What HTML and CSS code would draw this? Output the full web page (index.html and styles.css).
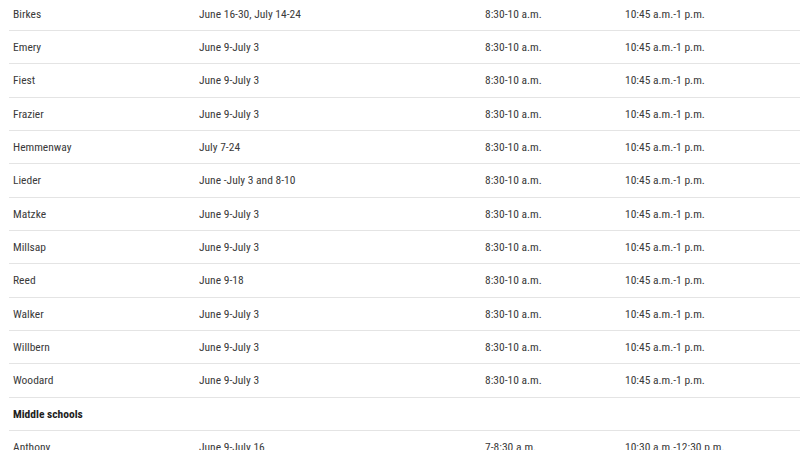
FILE: index.html
```html
<!DOCTYPE html>
<html><head><link rel="stylesheet" href="styles.css"></head>
<body>
<div class="schedule">
  <div class="row"><span>Birkes</span><span>June 16-30, July 14-24</span><span>8:30-10 a.m.</span><span>10:45 a.m.-1 p.m.</span></div>
  <div class="row"><span>Emery</span><span>June 9-July 3</span><span>8:30-10 a.m.</span><span>10:45 a.m.-1 p.m.</span></div>
  <div class="row"><span>Fiest</span><span>June 9-July 3</span><span>8:30-10 a.m.</span><span>10:45 a.m.-1 p.m.</span></div>
  <div class="row"><span>Frazier</span><span>June 9-July 3</span><span>8:30-10 a.m.</span><span>10:45 a.m.-1 p.m.</span></div>
  <div class="row"><span>Hemmenway</span><span>July 7-24</span><span>8:30-10 a.m.</span><span>10:45 a.m.-1 p.m.</span></div>
  <div class="row"><span>Lieder</span><span>June -July 3 and 8-10</span><span>8:30-10 a.m.</span><span>10:45 a.m.-1 p.m.</span></div>
  <div class="row"><span>Matzke</span><span>June 9-July 3</span><span>8:30-10 a.m.</span><span>10:45 a.m.-1 p.m.</span></div>
  <div class="row"><span>Millsap</span><span>June 9-July 3</span><span>8:30-10 a.m.</span><span>10:45 a.m.-1 p.m.</span></div>
  <div class="row"><span>Reed</span><span>June 9-18</span><span>8:30-10 a.m.</span><span>10:45 a.m.-1 p.m.</span></div>
  <div class="row"><span>Walker</span><span>June 9-July 3</span><span>8:30-10 a.m.</span><span>10:45 a.m.-1 p.m.</span></div>
  <div class="row"><span>Willbern</span><span>June 9-July 3</span><span>8:30-10 a.m.</span><span>10:45 a.m.-1 p.m.</span></div>
  <div class="row"><span>Woodard</span><span>June 9-July 3</span><span>8:30-10 a.m.</span><span>10:45 a.m.-1 p.m.</span></div>
  <div class="row section"><span>Middle schools</span><span></span><span></span><span></span></div>
  <div class="row"><span>Anthony</span><span>June 9-July 16</span><span>7-8:30 a.m.</span><span>10:30 a.m.-12:30 p.m.</span></div>
</div>
</body></html>
```
FILE: styles.css
```css
html, body { margin: 0; padding: 0; background: #fff; }
body { overflow: hidden; }
.schedule {
  margin: -2.33px 0 0 9px;
  width: 820px;
  font-family: Roboto, "Roboto Condensed", sans-serif;
  font-stretch: 75%;
  font-size: 11.5px;
  color: #3a3a3a;
}
.row {
  display: grid;
  grid-template-columns: 186px 286px 140px 1fr;
  align-items: center;
  height: 33.333px;
  box-sizing: border-box;
  border-bottom: 1px solid #e4e4e4;
}
.row span { padding-left: 4px; white-space: nowrap; }
.section span { font-weight: 700; color: #222; }
```
